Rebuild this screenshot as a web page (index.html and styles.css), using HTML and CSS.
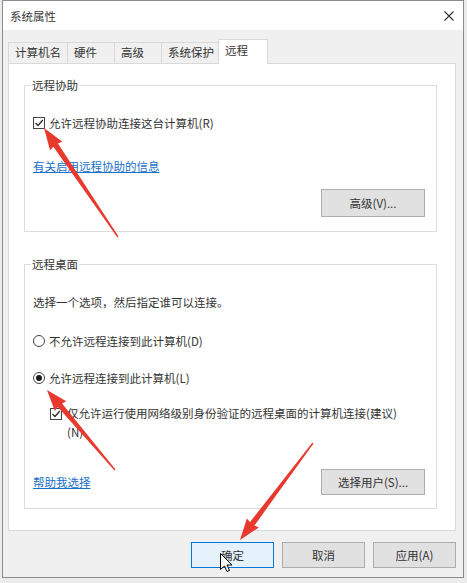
FILE: index.html
```html
<!DOCTYPE html>
<html lang="zh-CN">
<head>
<meta charset="utf-8">
<title>系统属性</title>
<link rel="stylesheet" href="styles.css">
</head>
<body>
<div class="window">
  <div class="titlebar">
    <span class="title">系统属性</span>
    <svg class="close" width="10" height="10" viewBox="0 0 10 10"><path d="M0.5 0.5 L9.5 9.5 M9.5 0.5 L0.5 9.5" stroke="#333" stroke-width="1.1" fill="none"/></svg>
  </div>
  <div class="client">
    <div class="tabs">
      <div class="tab t1">计算机名</div>
      <div class="tab t2">硬件</div>
      <div class="tab t3">高级</div>
      <div class="tab t4">系统保护</div>
      <div class="tab t5 active">远程</div>
    </div>
    <div class="panel">
      <fieldset class="group g1">
        <legend>远程协助</legend>
        <div class="row">
          <span class="cb"><svg width="10" height="10" viewBox="0 0 10 10"><path d="M1.5 5 L4 7.5 L8.8 2" stroke="#2a2a2a" stroke-width="1.3" fill="none"/></svg></span>
          <span>允许远程协助连接这台计算机(R)</span>
        </div>
        <a class="link">有关启用远程协助的信息</a>
        <div class="btnrow"><button class="btn">高级(V)...</button></div>
      </fieldset>
      <fieldset class="group g2">
        <legend>远程桌面</legend>
        <p class="desc">选择一个选项，然后指定谁可以连接。</p>
        <div class="row radio r1"><span class="rb"></span><span>不允许远程连接到此计算机(D)</span></div>
        <div class="row radio r2"><span class="rb on"></span><span>允许远程连接到此计算机(L)</span></div>
        <div class="row nla">
          <span class="cb"><svg width="10" height="10" viewBox="0 0 10 10"><path d="M1.5 5 L4 7.5 L8.8 2" stroke="#2a2a2a" stroke-width="1.3" fill="none"/></svg></span>
          <span class="nla-text">仅允许运行使用网络级别身份验证的远程桌面的计算机连接(建议)(N)</span>
        </div>
        <div class="btnrow split"><a class="link">帮助我选择</a><button class="btn btn-sm">选择用户(S)...</button></div>
      </fieldset>
    </div>
    <div class="footer">
      <button class="btn default">确定</button>
      <button class="btn">取消</button>
      <button class="btn">应用(A)</button>
    </div>
  </div>
</div>
<svg class="overlay" width="467" height="583" viewBox="0 0 467 583">
  <g fill="#e8392f">
    <g transform="translate(118 237) rotate(-124.17)"><polygon points="0,-0.7 111,-2.8 110,-7.5 131.7,0 110,7.5 111,2.8 0,0.7"/></g>
    <g transform="translate(115 470) rotate(-130.4)"><polygon points="0,-0.7 85,-2.8 84,-7.5 105,0 84,7.5 85,2.8 0,0.7"/></g>
    <g transform="translate(313 443) rotate(126.97)"><polygon points="0,-0.7 101,-2.8 100,-7.5 121.4,0 100,7.5 101,2.8 0,0.7"/></g>
  </g>
  <path transform="translate(220.5 553.5)" d="M0 0 V16 L4 12.5 L6.5 18 L9 17 L6.5 11.5 H11.5 Z" fill="#fff" stroke="#000" stroke-width="1" stroke-linejoin="round"/>
</svg>
</body>
</html>
```
FILE: styles.css
```css
* { box-sizing: border-box; }
html, body { margin: 0; padding: 0; }
body {
  width: 467px;
  height: 583px;
  position: relative;
  overflow: hidden;
  background: #ececec;
  font-family: "Noto Sans CJK SC", "Microsoft YaHei", sans-serif;
  font-size: 11.5px;
  color: #333;
}
.window {
  margin-left: 2px;
  width: 462px;
  border: 1px solid #8c8c8c;
  background: #f0f0f0;
}
.titlebar {
  height: 29px;
  background: #fff;
  display: flex;
  align-items: center;
  justify-content: space-between;
  padding: 0 9px 0 7px;
}
.title { line-height: 16px; color: #3a3a3a; }
.close { display: block; }
.client { padding: 0 7px 9px 5px; }
.tabs {
  display: flex;
  align-items: flex-end;
  height: 24px;
  margin-top: 9px;
}
.tab {
  height: 21px;
  border: 1px solid #d9d9d9;
  border-bottom: none;
  background: #f0f0f0;
  padding-left: 6px;
  line-height: 19px;
  margin-left: -1px;
  white-space: nowrap;
}
.t1 { width: 60px; margin-left: 0; }
.t2 { width: 48px; }
.t3 { width: 48px; }
.t4 { width: 58px; }
.t5 { width: 50px; }
.tab.active {
  height: 25px;
  background: #fff;
  margin-bottom: -1px;
  position: relative;
  z-index: 1;
  line-height: 21px;
}
.panel {
  background: #fff;
  border: 1px solid #d9d9d9;
  padding: 13px 18px 21px 15px;
}
.group {
  margin: 0;
  min-width: 0;
  border: 1px solid #dcdcdc;
  padding: 22px 11px 13px 8px;
}
.g1 { padding-bottom: 14px; }
.g2 { margin-top: 24px; }
.group legend {
  padding: 0 1px;
  margin-left: -2px;
  line-height: 16px;
}
.row {
  display: flex;
  align-items: center;
  line-height: 16px;
}
.cb {
  width: 12px;
  height: 12px;
  flex: none;
  border: 1px solid #444;
  background: #fff;
  margin-right: 4px;
  display: flex;
  align-items: center;
  justify-content: center;
}
.cb svg { display: block; }
.link {
  display: block;
  width: max-content;
  margin-top: 27px;
  color: #1a6fc9;
  text-decoration: underline;
  line-height: 16px;
  cursor: pointer;
}
.btnrow {
  display: flex;
  justify-content: flex-end;
  margin-top: 15px;
}
.btn {
  font: inherit;
  color: #333;
  background: #e1e1e1;
  border: 1px solid #adadad;
  width: 104px;
  height: 28px;
  padding: 0;
}
.btn-sm { height: 26px; }
.desc { margin: 0; line-height: 16px; }
.r1 { margin-top: 23px; }
.r2 { margin-top: 21px; }
.rb {
  width: 12px;
  height: 12px;
  flex: none;
  border: 1px solid #444;
  border-radius: 50%;
  background: #fff;
  margin-right: 4px;
  display: flex;
  align-items: center;
  justify-content: center;
}
.rb.on::after {
  content: "";
  width: 6px;
  height: 6px;
  border-radius: 50%;
  background: #1a1a1a;
}
.nla {
  margin-top: 18px;
  margin-left: 17px;
  align-items: flex-start;
  line-height: 19px;
}
.nla .cb { margin-top: 3.5px; margin-right: 5px; }
.nla-text { width: 340px; }
.split {
  justify-content: space-between;
  align-items: center;
  margin-top: 27px;
}
.split .link { margin-top: 0; }
.footer {
  display: flex;
  justify-content: flex-end;
  gap: 8px;
  margin-top: 11px;
}
.footer .btn { width: 83px; height: 26px; }
.btn.default {
  background: #e5f1fb;
  border-color: #0078d7;
}
.overlay {
  position: absolute;
  left: 0;
  top: 0;
  pointer-events: none;
}
```
